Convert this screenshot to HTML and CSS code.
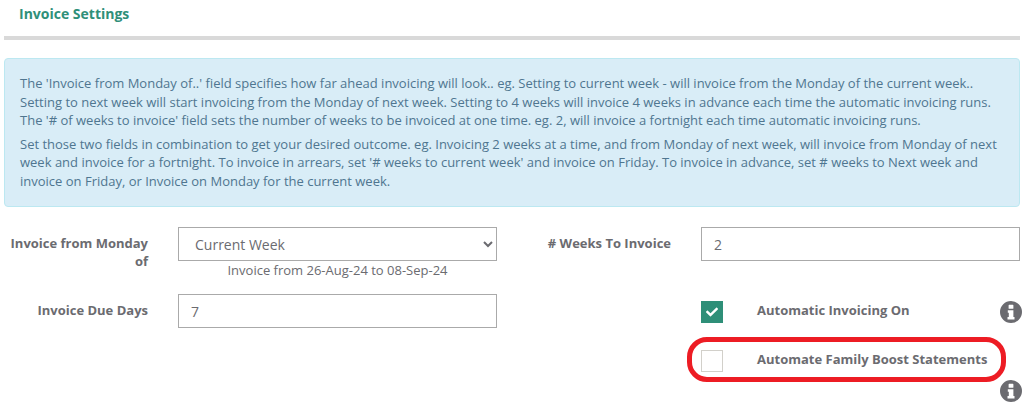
FILE: index.html
```html
<!DOCTYPE html>
<html lang="en">
<head>
    <meta charset="UTF-8">
    <meta name="viewport" content="width=device-width, initial-scale=1.0">
    <title>Invoice Settings</title>
    <link rel="stylesheet" href="styles.css">
</head>
<body>
    <div class="container">
        <h4 class="section-title">Invoice Settings</h4>

        <div class="alert-info">
            <p>The 'Invoice from Monday of..' field specifies how far ahead invoicing will look.. eg. Setting to current week - will invoice from the Monday of the current week.. Setting to next week will start invoicing from the Monday of next week. Setting to 4 weeks will invoice 4 weeks in advance each time the automatic invoicing runs. The '# of weeks to invoice' field sets the number of weeks to be invoiced at one time. eg. 2, will invoice a fortnight each time automatic invoicing runs.</p>
            <p>Set those two fields in combination to get your desired outcome. eg. Invoicing 2 weeks at a time, and from Monday of next week, will invoice from Monday of next week and invoice for a fortnight. To invoice in arrears, set '# weeks to current week' and invoice on Friday. To invoice in advance, set # weeks to Next week and invoice on Friday, or Invoice on Monday for the current week.</p>
        </div>

        <form class="form-grid">
            <!-- First row -->
            <label class="field-label" for="from-monday">Invoice from Monday of</label>
            <div>
                <select id="from-monday" class="field">
                    <option>Current Week</option>
                </select>
                <div class="field-note">Invoice from 26-Aug-24 to 08-Sep-24</div>
            </div>
            <label class="field-label" for="weeks">
                # Weeks To Invoice
            </label>
            <input id="weeks" class="field" type="text" value="2">

            <!-- Second row -->
            <label class="field-label" for="due-days">Invoice Due Days</label>
            <input id="due-days" class="field" type="text" value="7">
            <div class="check-stack">
                <div class="check-row">
                    <span class="check-box checked">
                        <svg class="check-mark" viewBox="0 0 512 512"><path d="M173.898 439.404l-166.4-166.4c-9.997-9.997-9.997-26.206 0-36.204l36.203-36.204c9.997-9.998 26.207-9.998 36.204 0L192 312.69 432.095 72.596c9.997-9.997 26.207-9.997 36.204 0l36.203 36.204c9.997 9.997 9.997 26.206 0 36.204l-294.4 294.401c-9.998 9.997-26.207 9.997-36.204-.001z"/></svg>
                    </span>
                    <span class="check-label">Automatic Invoicing On</span>
                    <svg class="info-icon" viewBox="0 0 22 22"><path fill-rule="evenodd" d="M11 0a11 11 0 1 0 0 22a11 11 0 1 0 0-22zM9.2 3.8h3.6a.6.6 0 0 1 .6.6v2.8a.6.6 0 0 1-.6.6H9.2a.6.6 0 0 1-.6-.6V4.400a.6.6 0 0 1 .6-.6zM7.800 9.300h5.600v6.800h1.100v2.500H7.500v-2.500h1.300v-4.300H7.800z"/></svg>
                </div>
                <div class="check-row family-boost">
                    <span class="check-box"></span>
                    <span class="check-label">Automate Family Boost Statements</span>
                    <svg class="info-icon" viewBox="0 0 22 22"><path fill-rule="evenodd" d="M11 0a11 11 0 1 0 0 22a11 11 0 1 0 0-22zM9.2 3.8h3.6a.6.6 0 0 1 .6.6v2.8a.6.6 0 0 1-.6.6H9.2a.6.6 0 0 1-.6-.6V4.400a.6.6 0 0 1 .6-.6zM7.800 9.300h5.600v6.800h1.100v2.500H7.500v-2.500h1.300v-4.300H7.800z"/></svg>
                    <span class="highlight-ring"></span>
                </div>
            </div>
        </form>
    </div>
</body>
</html>
```

FILE: styles.css
```css
body {
    font-family: "Open Sans", Arial, sans-serif;
    font-size: 13px;
    margin: 0;
    background-color: #fff;
    color: #6b6b70;
}
.container {
    width: 1016px;
    margin-left: 4px;
}
.section-title {
    margin: 0;
    height: 40px;
    padding: 5px 0 0 15px;
    box-sizing: border-box;
    font-size: 14px;
    line-height: 18px;
    font-weight: 700;
    color: #2f8f79;
    border-bottom: 4px solid #d9d9d9;
}
.alert-info {
    box-sizing: border-box;
    height: 149px;
    margin-top: 18px;
    padding: 15px;
    background-color: #d9edf7;
    border: 1px solid #bce8f1;
    border-radius: 4px;
    color: #4f7690;
    line-height: 18.57px;
}
.alert-info p {
    margin: 0 0 5px;
}
.form-grid {
    display: grid;
    grid-template-columns: 144px 319px 144px 319px;
    column-gap: 30px;
    margin-top: 20px;
}
.field-label {
    padding-top: 7px;
    font-weight: 700;
    line-height: 18px;
    text-align: right;
}
.field {
    box-sizing: border-box;
    display: block;
    width: 319px;
    height: 34px;
    padding: 0 12px;
    border: 1px solid #aaa;
    border-radius: 0;
    background-color: #fff;
    font-family: inherit;
    font-size: 14px;
    color: #6b6b70;
}
.field-note {
    height: 33px;
    line-height: 18px;
    text-align: center;
}
.check-stack {
    grid-column: 3 / 5;
    display: flex;
    flex-direction: column;
    gap: 27px;
    padding: 7px 0 0 174px;
}
.check-row {
    display: flex;
    flex-wrap: wrap;
    align-items: center;
    position: relative;
    width: 321px;
}
.check-box {
    box-sizing: border-box;
    width: 22px;
    height: 22px;
    margin-right: 34px;
    display: flex;
    align-items: center;
    justify-content: center;
    border: 1px solid #d2d0ca;
    background-color: #fff;
}
.check-box.checked {
    background-color: #2e8f78;
    border-color: #2e8f78;
}
.check-mark {
    width: 12px;
    height: 12px;
    fill: #fff;
}
.check-label {
    font-weight: 700;
    line-height: 18px;
    margin-bottom: 4px;
    margin-right: auto;
}
.info-icon {
    width: 22px;
    height: 22px;
    fill: #6b6b70;
}
.family-boost .check-label {
    width: 265px;
}
.family-boost .info-icon {
    margin: 8px 0 0 auto;
}
.highlight-ring {
    position: absolute;
    left: -14px;
    top: -13px;
    width: 319px;
    height: 45px;
    box-sizing: border-box;
    border: 5px solid #ed1c24;
    border-radius: 20px;
}
```
